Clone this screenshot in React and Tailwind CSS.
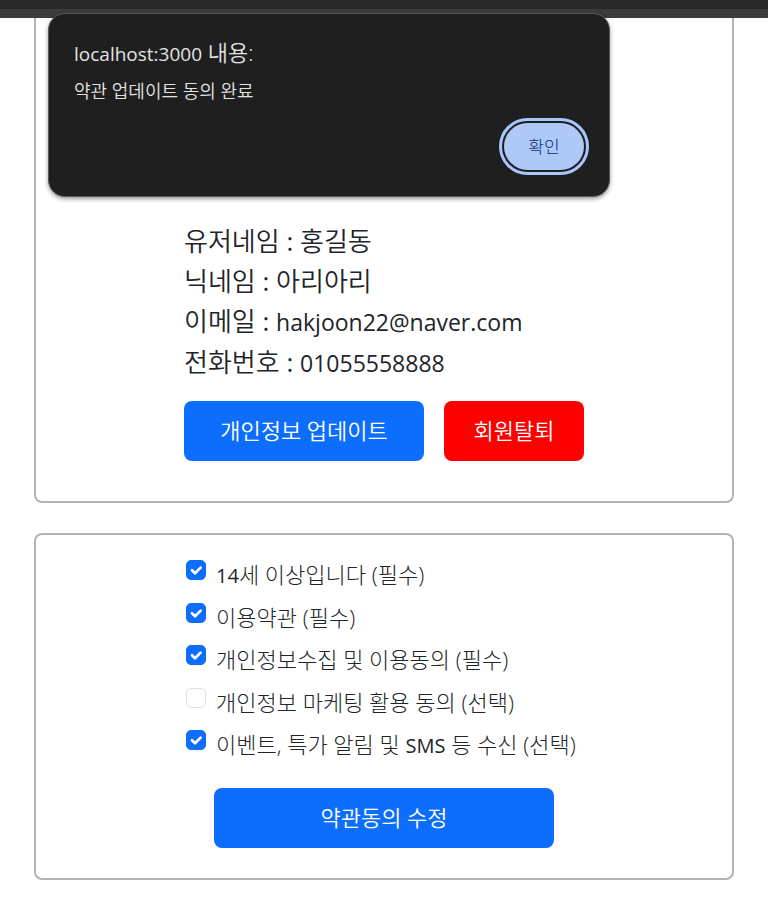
import { useState } from "react";

const profile = [
  { label: "유저네임", value: "홍길동" },
  { label: "닉네임", value: "아리아리" },
  { label: "이메일", value: "hakjoon22@naver.com", latin: true },
  { label: "전화번호", value: "01055558888", latin: true },
];

const terms = [
  { id: "age", prefix: "14", text: "세 이상입니다 (필수)", checked: true },
  { id: "service", text: "이용약관 (필수)", checked: true },
  { id: "privacy", text: "개인정보수집 및 이용동의 (필수)", checked: true },
  { id: "marketing", text: "개인정보 마케팅 활용 동의 (선택)", checked: false },
  { id: "events", text: "이벤트, 특가 알림 및 ", latin: "SMS", rest: " 등 수신 (선택)", checked: true },
];

function TermRow({ term }) {
  const [checked, setChecked] = useState(term.checked);
  return (
    <div className="flex items-start gap-[10px]">
      <span className="grid size-5 shrink-0">
        <input
          id={term.id}
          type="checkbox"
          checked={checked}
          onChange={(e) => setChecked(e.target.checked)}
          className="col-start-1 row-start-1 size-5 appearance-none rounded-[5px] border border-[#dee2e6] bg-white checked:border-[#0d6efd] checked:bg-[#0d6efd]"
        />
        {checked && (
          <svg viewBox="0 0 20 20" className="pointer-events-none col-start-1 row-start-1 size-5" aria-hidden="true">
            <path d="M6 10.2l3 3 5.6-5.6" fill="none" stroke="white" strokeWidth="2.7" strokeLinecap="round" strokeLinejoin="round" />
          </svg>
        )}
      </span>
      <label htmlFor={term.id} className="text-[22px] leading-7 font-light whitespace-nowrap">
        {term.prefix && <span className="text-[20px] font-normal">{term.prefix}</span>}
        {term.text}
        {term.latin && <span className="text-[20px] font-normal">{term.latin}</span>}
        {term.rest}
      </label>
    </div>
  );
}

export default function App() {
  return (
    <div className="relative bg-white font-['Open_Sans','Noto_Sans_CJK_KR',sans-serif] text-[#212529]">
      <header className="h-[18px] border-b-9 border-[#3c3c3c] bg-[#282828]" />

      <main className="flex flex-col gap-[30px] px-[34px] pb-7">
        <section className="flex flex-col items-center rounded-b-lg border-2 border-t-0 border-[#b3b3b3] pt-[203px] pb-10">
          <div className="w-[400px]">
            {profile.map((row) => (
              <p key={row.label} className="text-[26px] leading-[40px] font-[350] whitespace-nowrap">
                {row.label}
                <span className="font-normal"> : </span>
                <span className={row.latin ? "text-[23px] font-normal" : ""}>{row.value}</span>
              </p>
            ))}
            <div className="mt-[18px] flex gap-5">
              <button type="button" className="h-[60px] w-[240px] rounded-lg bg-[#0d6efd] pb-[2px] text-[22px] font-[350] text-white">
                개인정보 업데이트
              </button>
              <button type="button" className="h-[60px] w-[140px] rounded-lg bg-[#ff0000] pb-[2px] text-[22px] font-[350] text-white">
                회원탈퇴
              </button>
            </div>
          </div>
        </section>

        <section className="flex flex-col items-center rounded-lg border-2 border-[#b3b3b3] pt-[25px] pb-[30px]">
          <div className="grid h-[213px] w-[396px] grid-rows-5">
            {terms.map((term) => (
              <TermRow key={term.id} term={term} />
            ))}
          </div>
          <button type="button" className="mt-[15px] h-[60px] w-[340px] rounded-lg bg-[#0d6efd] pb-[2px] text-[22px] font-[350] text-white">
            약관동의 수정
          </button>
        </section>
      </main>

      <div
        role="alertdialog"
        aria-labelledby="alert-title"
        aria-describedby="alert-message"
        className="absolute top-[13px] left-12 flex w-[562px] flex-col rounded-[17px] border border-[#5a5a5a] bg-[#1f1f1f] px-[25px] pt-[23px] pb-[26px] text-[#e3e3e3] shadow-[0_2px_4px_rgba(0,0,0,0.4)]"
      >
        <h1 id="alert-title" className="text-[22px] leading-[30px] whitespace-nowrap">
          <span className="text-[19px]">localhost:3000</span> <span className="font-[350]">내용:</span>
        </h1>
        <p id="alert-message" className="mt-[10px] text-[18px] leading-6 font-[350]">
          약관 업데이트 동의 완료
        </p>
        <button
          type="button"
          className="mt-5 h-[47px] w-20 self-end rounded-full bg-[#aec9f7] text-[17px] font-light text-[#062e6f] outline-3 outline-offset-2 outline-[#a8c7fa]"
        >
          확인
        </button>
      </div>
    </div>
  );
}
